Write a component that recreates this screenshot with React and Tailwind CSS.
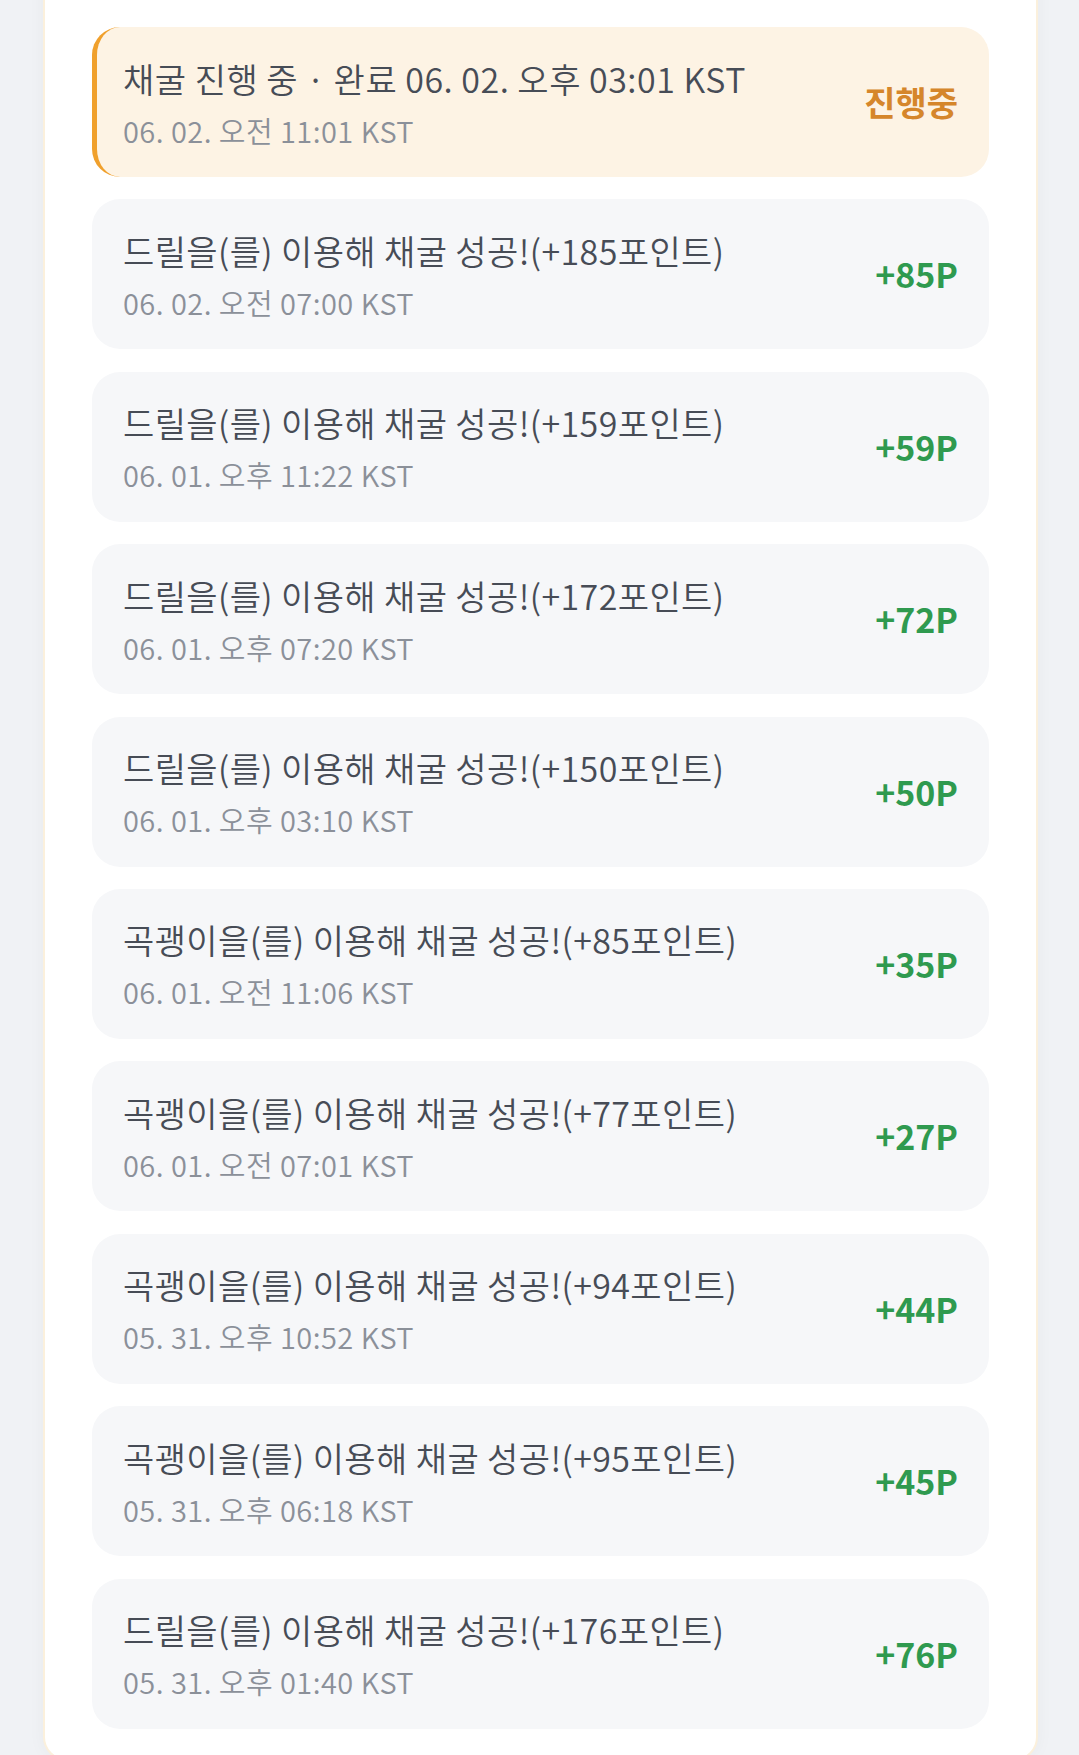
const items = [
  { title: "드릴을(를) 이용해 채굴 성공!(+185포인트)", time: "06. 02. 오전 07:00 KST", amount: "+85P" },
  { title: "드릴을(를) 이용해 채굴 성공!(+159포인트)", time: "06. 01. 오후 11:22 KST", amount: "+59P" },
  { title: "드릴을(를) 이용해 채굴 성공!(+172포인트)", time: "06. 01. 오후 07:20 KST", amount: "+72P" },
  { title: "드릴을(를) 이용해 채굴 성공!(+150포인트)", time: "06. 01. 오후 03:10 KST", amount: "+50P" },
  { title: "곡괭이을(를) 이용해 채굴 성공!(+85포인트)", time: "06. 01. 오전 11:06 KST", amount: "+35P" },
  { title: "곡괭이을(를) 이용해 채굴 성공!(+77포인트)", time: "06. 01. 오전 07:01 KST", amount: "+27P" },
  { title: "곡괭이을(를) 이용해 채굴 성공!(+94포인트)", time: "05. 31. 오후 10:52 KST", amount: "+44P" },
  { title: "곡괭이을(를) 이용해 채굴 성공!(+95포인트)", time: "05. 31. 오후 06:18 KST", amount: "+45P" },
  { title: "드릴을(를) 이용해 채굴 성공!(+176포인트)", time: "05. 31. 오후 01:40 KST", amount: "+76P" },
];

const font = { fontFamily: '"Noto Sans CJK KR", "Noto Sans", sans-serif' };

export default function App() {
  return (
    <div className="min-h-[1755px] w-[1079px] overflow-hidden bg-[#f0f2f5]" style={font}>
      <div className="ml-[43px] mr-[41px] -mt-[40px] rounded-[24px] border-2 border-[#fbf0dc] bg-white px-[47px] pt-[65px] pb-[30px] shadow-[0_0_18px_rgba(0,0,0,0.04)]">
        <div className="flex flex-col gap-[22.4px]">
          <div className="flex h-[150px] items-center justify-between rounded-[28px] border-l-[5px] border-[#f0a02c] bg-[#fdf3e4] pl-[26px] pr-[31px]">
            <div className="flex flex-col pt-[2px]">
              <div className="text-[34px] font-[350] leading-[46px] tracking-[0.5px] text-[#474c56]">채굴 진행 중 · 완료 06. 02. 오후 03:01 KST</div>
              <div className="mt-[8px] text-[29px] font-[350] leading-[41px] tracking-[0.45px] text-[#8b9099]">06. 02. 오전 11:01 KST</div>
            </div>
            <div className="text-[34px] font-bold leading-none text-[#d5862b]">진행중</div>
          </div>
          {items.map((it, i) => (
            <div key={i} className="flex h-[150px] items-center justify-between rounded-[28px] bg-[#f6f7f9] pl-[31px] pr-[31px]">
              <div className="flex flex-col pt-[2px]">
                <div className="text-[34px] font-[350] leading-[46px] tracking-[0.4px] text-[#474c56]">{it.title}</div>
                <div className="mt-[8px] text-[29px] font-[350] leading-[41px] tracking-[0.45px] text-[#8b9099]">{it.time}</div>
              </div>
              <div className="text-[34px] font-bold leading-none text-[#2f9a4f]">{it.amount}</div>
            </div>
          ))}
        </div>
      </div>
    </div>
  );
}
